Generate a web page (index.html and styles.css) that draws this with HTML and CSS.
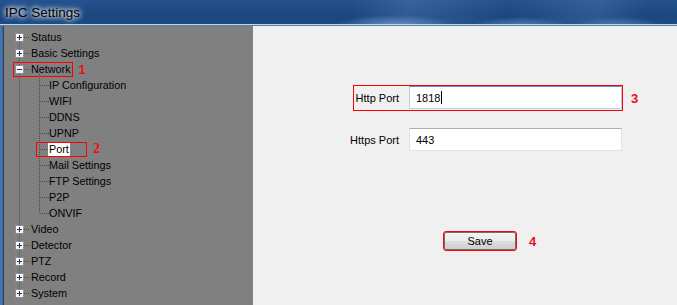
FILE: index.html
```html
<!DOCTYPE html>
<html lang="en">
<head>
    <meta charset="UTF-8">
    <title>IPC Settings</title>
    <link rel="stylesheet" href="styles.css">
</head>
<body>
    <div class="window">
        <div class="titlebar">
            <span class="title">IPC Settings</span>
        </div>

        <div class="main">
            <div class="frame-left"></div>

            <div class="tree-panel">
                <ul class="tree">
                    <li><div class="row"><span class="toggle"><svg width="9" height="9"><path d="M2 4.5h5M4.5 2v5" stroke="#1e2f66" stroke-width="1"/></svg></span><span class="dash"></span><span class="label">Status</span></div></li>
                    <li><div class="row"><span class="toggle"><svg width="9" height="9"><path d="M2 4.5h5M4.5 2v5" stroke="#1e2f66" stroke-width="1"/></svg></span><span class="dash"></span><span class="label">Basic Settings</span></div></li>
                    <li>
                        <div class="row">
                            <span class="toggle"><svg width="9" height="9"><path d="M2 4.5h5" stroke="#1e2f66" stroke-width="1"/></svg></span><span class="dash"></span><span class="label">Network</span>
                            <span class="mark mark-network"></span>
                            <span class="num num-1">1</span>
                        </div>
                        <ul class="children">
                            <li class="row leaf"><span class="dash-long"></span><span class="label">IP Configuration</span></li>
                            <li class="row leaf"><span class="dash-long"></span><span class="label">WIFI</span></li>
                            <li class="row leaf"><span class="dash-long"></span><span class="label">DDNS</span></li>
                            <li class="row leaf"><span class="dash-long"></span><span class="label">UPNP</span></li>
                            <li class="row leaf">
                                <span class="dash-long"></span><span class="label selected">Port</span>
                                <span class="mark mark-port"></span>
                                <span class="num num-2">2</span>
                            </li>
                            <li class="row leaf"><span class="dash-long"></span><span class="label">Mail Settings</span></li>
                            <li class="row leaf"><span class="dash-long"></span><span class="label">FTP Settings</span></li>
                            <li class="row leaf"><span class="dash-long"></span><span class="label">P2P</span></li>
                            <li class="row leaf"><span class="dash-long"></span><span class="label">ONVIF</span></li>
                        </ul>
                    </li>
                    <li><div class="row"><span class="toggle"><svg width="9" height="9"><path d="M2 4.5h5M4.5 2v5" stroke="#1e2f66" stroke-width="1"/></svg></span><span class="dash"></span><span class="label">Video</span></div></li>
                    <li><div class="row"><span class="toggle"><svg width="9" height="9"><path d="M2 4.5h5M4.5 2v5" stroke="#1e2f66" stroke-width="1"/></svg></span><span class="dash"></span><span class="label">Detector</span></div></li>
                    <li><div class="row"><span class="toggle"><svg width="9" height="9"><path d="M2 4.5h5M4.5 2v5" stroke="#1e2f66" stroke-width="1"/></svg></span><span class="dash"></span><span class="label">PTZ</span></div></li>
                    <li><div class="row"><span class="toggle"><svg width="9" height="9"><path d="M2 4.5h5M4.5 2v5" stroke="#1e2f66" stroke-width="1"/></svg></span><span class="dash"></span><span class="label">Record</span></div></li>
                    <li><div class="row"><span class="toggle"><svg width="9" height="9"><path d="M2 4.5h5M4.5 2v5" stroke="#1e2f66" stroke-width="1"/></svg></span><span class="dash"></span><span class="label">System</span></div></li>
                </ul>
            </div>

            <div class="content">
                <div class="form-row">
                    <div class="field marked">
                        <span class="field-label">Http Port</span>
                        <div class="textbox focused">1818<span class="caret"></span></div>
                    </div>
                    <span class="num num-side">3</span>
                </div>

                <div class="form-row">
                    <div class="field">
                        <span class="field-label">Https Port</span>
                        <div class="textbox">443</div>
                    </div>
                </div>

                <div class="button-row">
                    <button class="save-button">Save</button>
                    <span class="num num-side">4</span>
                </div>
            </div>
        </div>
    </div>
</body>
</html>
```

FILE: styles.css
```css
* {
    margin: 0;
    padding: 0;
    box-sizing: border-box;
}

body {
    font-family: "Liberation Sans", Arial, sans-serif;
    width: 677px;
    height: 305px;
    overflow: hidden;
    background: #808080;
    color: #000;
}

/* title bar */

.titlebar {
    height: 26px;
    padding-left: 5px;
    display: flex;
    align-items: center;
    border-bottom: 1px solid #5a7eaa;
    box-shadow: inset 0 -1px 0 #c4d4e8;
    background:
        radial-gradient(ellipse 60px 10px at 395px 25px, rgba(120, 160, 215, 0.7), transparent),
        radial-gradient(ellipse 50px 9px at 520px 26px, rgba(120, 160, 215, 0.6), transparent),
        radial-gradient(ellipse 45px 9px at 620px 26px, rgba(120, 160, 215, 0.5), transparent),
        linear-gradient(100deg, transparent 0%, transparent 52%, rgba(90, 130, 190, 0.35) 60%, transparent 75%, rgba(90, 130, 190, 0.3) 88%, transparent 95%),
        linear-gradient(180deg, #24528e 0%, #1b467f 60%, #1d4a84 100%);
}

.title {
    font-size: 13.5px;
    color: #000;
    text-shadow: 0 0 4px #fff, 0 0 6px rgba(255, 255, 255, 0.8), 0 0 8px rgba(255, 255, 255, 0.6);
    padding-bottom: 1px;
}

/* body */

.main {
    display: flex;
    height: 279px;
}

.frame-left {
    width: 4px;
    background: linear-gradient(90deg, #4c7ab4 0%, #3a68a2 70%, #2f3c4e 75%, #2f3c4e 100%);
}

.tree-panel {
    width: 249px;
    background: #808080;
    padding-top: 3px;
    font-size: 10.8px;
}

.tree,
.children {
    list-style: none;
    position: relative;
}

.tree::before {
    content: "";
    position: absolute;
    left: 15px;
    top: 8px;
    bottom: 8px;
    border-left: 1px dotted #4a4a4a;
}

.children::before {
    content: "";
    position: absolute;
    left: 35px;
    top: -3px;
    bottom: 8px;
    border-left: 1px dotted #4a4a4a;
}

.row {
    position: relative;
    height: 16px;
    display: flex;
    align-items: center;
}

.toggle {
    position: relative;
    width: 9px;
    height: 9px;
    margin-left: 11px;
    border: 1px solid #8e8f8f;
    background: linear-gradient(180deg, #ffffff 0%, #f0f0f0 100%);
    display: flex;
}

.toggle svg {
    position: absolute;
    left: -1px;
    top: -1px;
}

.dash {
    width: 5px;
    margin-right: 2px;
    border-top: 1px dotted #4a4a4a;
}

.leaf {
    padding-left: 36px;
}

.dash-long {
    width: 9px;
    border-top: 1px dotted #4a4a4a;
}

.label {
    white-space: nowrap;
    line-height: 16px;
}

.label.selected {
    background: #fff;
    line-height: 15px;
    padding: 0 1px;
    margin-left: -1px;
}

/* annotations */

.mark {
    position: absolute;
    border: 1px solid #f00;
    pointer-events: none;
}

.mark-network {
    left: 9px;
    top: 1px;
    width: 60px;
    height: 15px;
}

.mark-port {
    left: 32px;
    top: 1px;
    width: 51px;
    height: 15px;
}

.num {
    color: #e8111a;
    font-weight: bold;
    font-size: 13px;
}

.num-1 {
    margin-left: 8px;
}

.num-2 {
    position: absolute;
    left: 89px;
    top: 0;
    font-family: "Liberation Serif", serif;
    font-size: 14px;
}

.num-side {
    margin-left: 9px;
}

/* right side */

.content {
    flex: 1;
    background: #f0f0f0;
    padding-top: 60px;
    padding-left: 101px;
    font-size: 11px;
}

.form-row {
    display: flex;
    align-items: center;
    margin-bottom: 18px;
}

.field {
    display: flex;
    align-items: flex-start;
    height: 24px;
}

.field.marked {
    outline: 1px solid #f00;
}

.field-label {
    width: 45px;
    height: 23px;
    display: flex;
    align-items: center;
    justify-content: flex-end;
    white-space: nowrap;
}

.textbox {
    width: 213px;
    height: 23px;
    margin-left: 10px;
    padding-left: 6px;
    display: flex;
    align-items: center;
    background: #fff;
    border: 1px solid #e2e3ea;
    border-top-color: #abadb3;
}

.textbox.focused {
    border-color: #b7d2ee;
    border-top-color: #5d8ecb;
}

.caret {
    width: 1px;
    height: 13px;
    background: #000;
    margin-left: 1px;
}

.button-row {
    display: flex;
    align-items: center;
    margin-top: 80px;
    margin-left: 90px;
}

.save-button {
    width: 72px;
    height: 18px;
    font-family: "Liberation Sans", Arial, sans-serif;
    font-size: 11px;
    color: #000;
    border: 1px solid #707070;
    border-radius: 2px;
    background: linear-gradient(180deg, #f2f2f2 0%, #ebebeb 50%, #dddddd 51%, #cfcfcf 100%);
    outline: 1px solid #f00;
}

.button-row .num-side {
    margin-left: 13px;
}
```
